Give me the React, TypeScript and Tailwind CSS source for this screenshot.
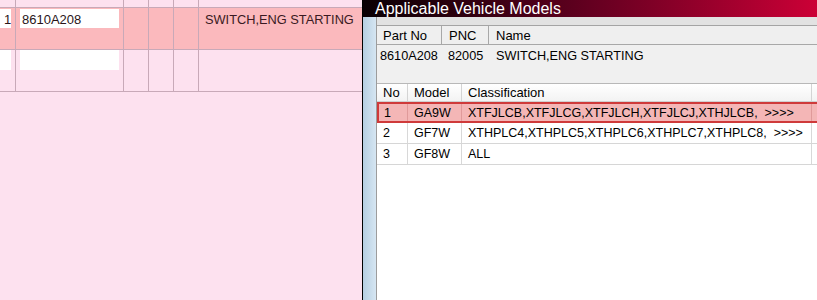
import React from "react";

const font = { fontFamily: '"Liberation Sans", Arial, sans-serif' };

function LeftRow({ h, bg, children }: { h: string; bg?: string; children?: React.ReactNode[] }) {
  const cells = children ?? [null, null, null, null, null, null];
  return (
    <div className={`grid grid-cols-[16px_108px_25px_25px_25px_1fr] border-b border-[#c8a9b8] ${h} ${bg ?? ""}`}>
      {cells.map((c, i) => (
        <div key={i} className={`${i < 5 ? "border-r border-[#c8a9b8]" : ""} relative`}>
          {c}
        </div>
      ))}
    </div>
  );
}

export default function App() {
  const rows = [
    ["1", "GA9W", "XTFJLCB,XTFJLCG,XTFJLCH,XTFJLCJ,XTHJLCB,  >>>>"],
    ["2", "GF7W", "XTHPLC4,XTHPLC5,XTHPLC6,XTHPLC7,XTHPLC8,  >>>>"],
    ["3", "GF8W", "ALL"],
  ];
  return (
    <div className="w-[817px] h-[300px] overflow-hidden flex text-[13px] text-black" style={font}>
      {/* Left panel */}
      <div className="w-[362px] h-full bg-[#fde1ef] flex flex-col shrink-0">
        <LeftRow h="h-[8px]" />
        <LeftRow h="h-[42px]" bg="bg-[#fbb9bd]">
          {[
            <div key="a" className="absolute left-0 top-[1px] w-[11px] h-[19px] bg-white pl-[4px] leading-[21px] text-[#2a1518]">1</div>,
            <div key="b" className="absolute left-[4px] top-[1px] w-[99px] h-[19px] bg-white pl-[2px] leading-[21px] text-[#2a1518]">8610A208</div>,
            null,
            null,
            null,
            <div key="f" className="pl-[6px] pt-[1px] leading-[21px] text-[12.8px] text-[#3a1a22] whitespace-nowrap">SWITCH,ENG STARTING</div>,
          ]}
        </LeftRow>
        <LeftRow h="h-[42px]">
          {[
            <div key="a" className="absolute left-0 top-0 w-[11px] h-[20px] bg-white" />,
            <div key="b" className="absolute left-[4px] top-0 w-[99px] h-[20px] bg-white" />,
            null,
            null,
            null,
            null,
          ]}
        </LeftRow>
      </div>

      {/* Right dialog */}
      <div className="flex-1 h-full flex flex-col border-l border-black min-w-0">
        <div className="h-[17px] shrink-0 bg-gradient-to-r from-[#0a0004] via-[#640020] to-[#cc0036] text-white text-[16px] leading-[17px] pl-[12px] whitespace-nowrap">
          Applicable Vehicle Models
        </div>
        <div className="flex-1 flex min-h-0">
          <div className="w-[14px] shrink-0 bg-gradient-to-r from-[#b6cfe2] to-[#d6e6f2] border-r border-[#9c9c9c]" />
          <div className="flex-1 bg-[#e2e2e2] flex flex-col min-w-0 pt-[8px]">
            {/* List 1 */}
            <div className="h-[57px] bg-[#f0f0f0] border-t border-[#a4a4a4] shrink-0">
              <div className="h-[19px] flex border-b border-[#a8a8a8] bg-[#efefef] leading-[19px]">
                <div className="w-[65px] border-r border-[#a8a8a8] pl-[6px]">Part No</div>
                <div className="w-[47px] border-r border-[#a8a8a8] pl-[7px]">PNC</div>
                <div className="flex-1 pl-[7px]">Name</div>
              </div>
              <div className="h-[22px] flex leading-[23px] whitespace-nowrap text-[12.7px]">
                <div className="w-[65px] pl-[3px]">8610A208</div>
                <div className="w-[47px] pl-[6px]">82005</div>
                <div className="flex-1 pl-[7px]">SWITCH,ENG STARTING</div>
              </div>
            </div>
            <div className="h-[1px] bg-[#f0f0f0] shrink-0" />
            {/* List 2 */}
            <div className="flex-1 bg-white border-t border-[#b8b8b8]">
              <div className="h-[18px] flex border-b border-[#d0d0d0] bg-gradient-to-b from-white to-[#f3f3f3] leading-[18px]">
                <div className="w-[31px] border-r border-[#d4d4d4] pl-[6px]">No</div>
                <div className="w-[54px] border-r border-[#d4d4d4] pl-[6px]">Model</div>
                <div className="w-[350px] border-r border-[#d4d4d4] pl-[6px]">Classification</div>
                <div className="flex-1" />
              </div>
              {rows.map((r, i) => (
                <div
                  key={i}
                  className={`h-[21px] flex whitespace-nowrap text-[12.5px] ${
                    i === 0
                      ? "bg-[#f4b6b6] border-2 border-r-0 border-[#cf3a3a] leading-[18px]"
                      : "border-b border-[#d6d6d6] leading-[21px]"
                  }`}
                >
                  <div className={`${i === 0 ? "w-[29px] border-[#e09a9a] pl-[5px]" : "w-[31px] border-[#d8d8d8] pl-[6px]"} border-r`}>{r[0]}</div>
                  <div className={`w-[54px] border-r ${i === 0 ? "border-[#e09a9a]" : "border-[#d8d8d8]"} pl-[6px]`}>{r[1]}</div>
                  <div className={`w-[350px] border-r ${i === 0 ? "border-[#e09a9a]" : "border-[#d8d8d8]"} pl-[6px] whitespace-pre`}>{r[2]}</div>
                  <div className="flex-1" />
                </div>
              ))}
            </div>
          </div>
        </div>
      </div>
    </div>
  );
}
